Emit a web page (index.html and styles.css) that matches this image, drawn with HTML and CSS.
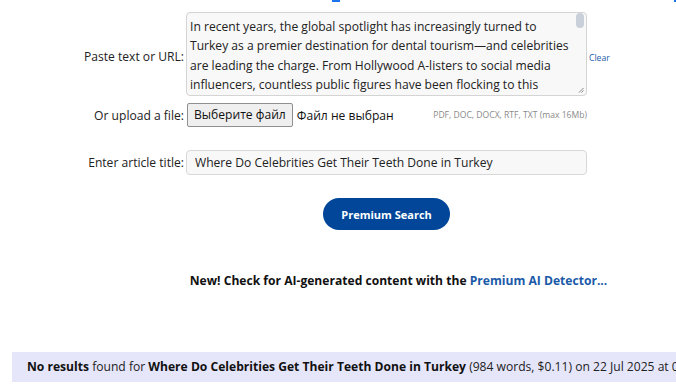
FILE: index.html
```html
<!DOCTYPE html>
<html lang="en">
<head>
<meta charset="utf-8">
<title>Premium Search</title>
<link rel="stylesheet" href="styles.css">
</head>
<body>
<div class="topmarks"><span class="mark mark-a"></span><span class="mark mark-b"></span></div>
<form class="form">
  <label class="label label-text" for="txt">Paste text or URL:</label>
  <div class="tawrap">
    <textarea id="txt" class="textarea">In recent years, the global spotlight has increasingly turned to Turkey as a premier destination for dental tourism—and celebrities are leading the charge. From Hollywood A-listers to social media influencers, countless public figures have been flocking to this vibrant country to achieve their dream smiles. But where exactly do celebrities get their teeth done in Turkey, and why has it become such a popular choice?</textarea>
    <span class="thumb"></span>
    <svg class="grip" width="6" height="6" viewBox="0 0 6 6"><path d="M1 5.5 L5.5 1 M3.5 5.5 L5.5 3.5" stroke="#777" stroke-width="0.9" fill="none"/></svg>
  </div>
  <a class="clear" href="#">Clear</a>

  <label class="label label-file">Or upload a file:</label>
  <div class="filerow">
    <span class="filebtn">Выберите файл</span>
    <span class="filename">Файл не выбран</span>
    <span class="hint">PDF, DOC, DOCX, RTF, TXT (max 16Mb)</span>
  </div>
  <span></span>

  <label class="label label-title" for="ttl">Enter article title:</label>
  <input id="ttl" class="input" type="text" value="Where Do Celebrities Get Their Teeth Done in Turkey">
  <span></span>

  <div class="btncell"><button type="button" class="search">Premium Search</button></div>
  <span></span>

  <p class="promo">New! Check for AI-generated content with the <a href="#">Premium AI Detector...</a></p>
</form>
<div class="result"><b>No results</b> found for <b>Where Do Celebrities Get Their Teeth Done in Turkey</b> (984 words, $0.11) on 22 Jul 2025 at 08:14</div>
</body>
</html>
```

FILE: styles.css
```css
html, body {
  margin: 0;
  padding: 0;
  background: #fff;
  overflow: hidden;
}
body {
  font-family: "Open Sans", "Liberation Sans", sans-serif;
  font-size: 12.1px;
  color: #222;
  width: 676px;
  height: 392px;
}
.topmarks {
  display: flex;
  height: 2px;
}
.mark {
  display: block;
  height: 2px;
  background: #1a73e8;
}
.mark-a {
  width: 8px;
  margin-left: 332px;
}
.mark-b {
  width: 2px;
  margin-left: 334px;
}
.form {
  display: grid;
  grid-template-columns: 184px 401px 22px;
  column-gap: 2px;
  margin: 10px 0 0 0;
  align-items: center;
}
.label {
  text-align: right;
  white-space: nowrap;
  color: #222;
}
.label-text {
  padding-top: 4px;
}
.tawrap {
  position: relative;
  width: 401px;
  height: 84px;
}
.textarea {
  display: block;
  box-sizing: border-box;
  width: 401px;
  height: 84px;
  margin: 0;
  padding: 4px 9px 4px 3px;
  font-family: "Open Sans", "Liberation Sans", sans-serif;
  font-size: 12.1px;
  line-height: 19.3px;
  color: #222;
  background: #f8f8f8;
  border: 1px solid #d4d4d4;
  border-radius: 4px;
  overflow: hidden;
  resize: none;
}
.thumb {
  position: absolute;
  top: 1px;
  right: 3px;
  width: 8px;
  height: 15px;
  border-radius: 4px;
  background: #c9d0da;
}
.grip {
  position: absolute;
  right: 3px;
  bottom: 3px;
}
.clear {
  font-size: 8.6px;
  color: #1a5aa8;
  text-decoration: none;
  padding-top: 7px;
}
.label-file {
  margin-top: 7px;
}
.filerow {
  margin-top: 7px;
  display: flex;
  align-items: center;
}
.filebtn {
  box-sizing: border-box;
  height: 24px;
  line-height: 22px;
  padding: 0 6px;
  margin-left: 1px;
  background: #efefef;
  border: 1px solid #8f8f8f;
  border-radius: 2px;
  color: #111;
}
.filename {
  margin-left: 4px;
  color: #111;
}
.hint {
  margin-left: auto;
  font-size: 8.6px;
  color: #8a8a8a;
}
.label-title {
  margin-top: 23px;
}
.input {
  margin-top: 23px;
  box-sizing: border-box;
  width: 401px;
  height: 25px;
  padding: 0 8px;
  font-family: "Open Sans", "Liberation Sans", sans-serif;
  font-size: 12.1px;
  color: #222;
  background: #f8f8f8;
  border: 1px solid #d8d8d8;
  border-radius: 4px;
}
.btncell {
  grid-column: 2;
  display: flex;
  justify-content: center;
  margin-top: 23px;
}
.search {
  width: 127px;
  height: 32px;
  border: none;
  border-radius: 16px;
  background: #02469a;
  color: #fff;
  font-family: "Open Sans", "Liberation Sans", sans-serif;
  font-size: 11px;
  font-weight: 700;
  padding: 0;
}
.promo {
  grid-column: 2 / span 2;
  margin: 42px 0 0 0;
  text-align: center;
  font-weight: 700;
  color: #111;
  white-space: nowrap;
}
.promo a {
  color: #1a5aa8;
  text-decoration: none;
}
.result {
  margin: 63px 0 0 12px;
  height: 30px;
  line-height: 30px;
  padding-left: 15px;
  background: #e6e6fa;
  white-space: nowrap;
  color: #222;
}
.result b {
  color: #111;
}
```
